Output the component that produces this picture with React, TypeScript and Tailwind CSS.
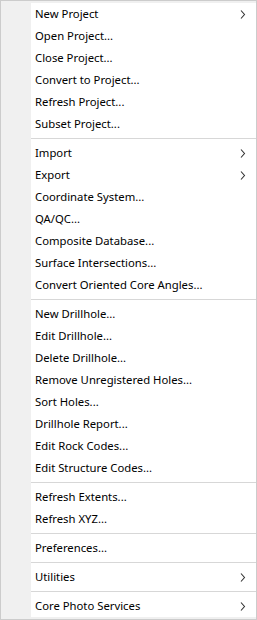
import React from "react";

type Item = { label: string; sub?: boolean } | "sep";

const items: Item[] = [
  { label: "New Project", sub: true },
  { label: "Open Project..." },
  { label: "Close Project..." },
  { label: "Convert to Project..." },
  { label: "Refresh Project..." },
  { label: "Subset Project..." },
  "sep",
  { label: "Import", sub: true },
  { label: "Export", sub: true },
  { label: "Coordinate System..." },
  { label: "QA/QC..." },
  { label: "Composite Database..." },
  { label: "Surface Intersections..." },
  { label: "Convert Oriented Core Angles..." },
  "sep",
  { label: "New Drillhole..." },
  { label: "Edit Drillhole..." },
  { label: "Delete Drillhole..." },
  { label: "Remove Unregistered Holes..." },
  { label: "Sort Holes..." },
  { label: "Drillhole Report..." },
  { label: "Edit Rock Codes..." },
  { label: "Edit Structure Codes..." },
  "sep",
  { label: "Refresh Extents..." },
  { label: "Refresh XYZ..." },
  "sep",
  { label: "Preferences..." },
  "sep",
  { label: "Utilities", sub: true },
  "sep",
  { label: "Core Photo Services", sub: true },
];

function Chevron() {
  return (
    <svg width="6" height="9" viewBox="0 0 6 9" className="absolute left-[209px] top-[7px]">
      <path d="M1 0.5 L4.5 4.5 L1 8.5" fill="none" stroke="#333" strokeWidth="1.1" />
    </svg>
  );
}

export default function App() {
  return (
    <div
      className="w-[257px] h-[620px] border border-[#cccccc] bg-[#f0f0f0] flex flex-col py-[2px] text-[11.3px] text-black"
      style={{ fontFamily: '"Noto Sans", "Segoe UI", sans-serif' }}
    >
      {items.map((it, i) =>
        it === "sep" ? (
          <div key={i} className="h-[7px] flex">
            <div className="w-[30px] shrink-0" />
            <div className="flex-1 bg-white flex items-center">
              <div className="h-px w-full bg-[#d7d7d7]" />
            </div>
          </div>
        ) : (
          <div key={i} className="h-[22px] flex">
            <div className="w-[30px] shrink-0" />
            <div className="relative flex-1 bg-white flex items-center pl-[4px]">
              <span className="leading-none">{it.label}</span>
              {it.sub && <Chevron />}
            </div>
          </div>
        )
      )}
    </div>
  );
}
